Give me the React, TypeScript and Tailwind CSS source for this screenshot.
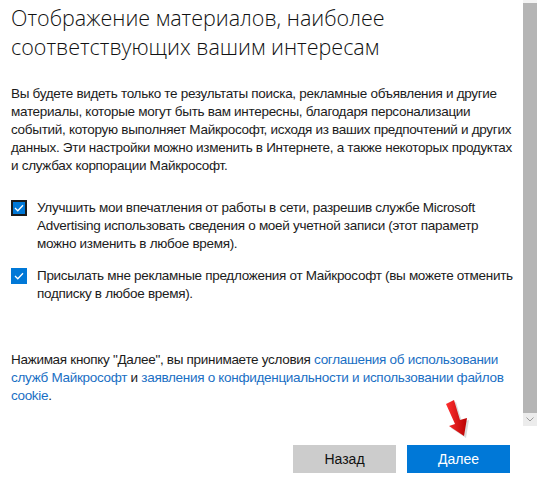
export default function App() {
  return (
    <main className="relative h-[483px] w-[550px] overflow-hidden bg-white [font-family:'Liberation_Sans',Arial,sans-serif] text-[#1b1b1b]">
      <div className="flex h-[426px]">
        <div className="w-[521px] shrink-0 overflow-hidden pl-[11px] whitespace-nowrap">
          <h1 className="pt-[3px] [font-family:'Open_Sans',sans-serif] text-[21.5px] font-light leading-[29px] text-[#111]">
            <div>Отображение материалов, наиболее</div>
            <div>соответствующих вашим интересам</div>
          </h1>

          <div className="mt-[24px] text-[13.5px] leading-[18px] tracking-[-0.3px]">
            <div>Вы будете видеть только те результаты поиска, рекламные объявления и другие</div>
            <div>материалы, которые могут быть вам интересны, благодаря персонализации</div>
            <div>событий, которую выполняет Майкрософт, исходя из ваших предпочтений и других</div>
            <div>данных. Эти настройки можно изменить в Интернете, а также некоторых продуктах</div>
            <div>и службах корпорации Майкрософт.</div>
          </div>

          <div className="mt-[24px] flex gap-[10px] text-[13.5px] leading-[18px] tracking-[-0.3px]">
            <CheckBox focused />
            <div>
              <div>Улучшить мои впечатления от работы в сети, разрешив службе Microsoft</div>
              <div>Advertising использовать сведения о моей учетной записи (этот параметр</div>
              <div>можно изменить в любое время).</div>
            </div>
          </div>

          <div className="mt-[14px] flex gap-[10px] text-[13.5px] leading-[18px] tracking-[-0.3px]">
            <CheckBox />
            <div>
              <div>Присылать мне рекламные предложения от Майкрософт (вы можете отменить</div>
              <div>подписку в любое время).</div>
            </div>
          </div>

          <div className="mt-[48px] text-[13.5px] leading-[18px] tracking-[-0.3px]">
            <div>
              Нажимая кнопку "Далее", вы принимаете условия{" "}
              <a className="text-[#1a6fc4]">соглашения об использовании</a>
            </div>
            <div>
              <a className="text-[#1a6fc4]">служб Майкрософт</a> и{" "}
              <a className="text-[#1a6fc4]">заявления о конфиденциальности и использовании файлов</a>
            </div>
            <div>
              <a className="text-[#1a6fc4]">cookie</a>.
            </div>
          </div>
        </div>

        <div className="ml-[2px] flex w-[14px] flex-col bg-[#f4f4f4]">
          <div className="mt-[3px] flex-1 bg-[#b5b5b5]" />
          <div className="flex h-[13px] items-center justify-center bg-[#ececec]">
            <svg width="8" height="5" viewBox="0 0 8 5" fill="none" stroke="#9a9a9a" strokeWidth="1">
              <path d="M0.5 0.5L4 4L7.5 0.5" />
            </svg>
          </div>
        </div>
      </div>

      <div className="mt-[19px] flex gap-[11px] pl-[293px] text-[14px]">
        <button className="h-[28px] w-[103px] bg-[#cccccc] text-[#111]">Назад</button>
        <button className="h-[28px] w-[103px] bg-[#0078d7] text-white">Далее</button>
      </div>

      <svg
        className="absolute left-[440px] top-[396px]"
        width="36"
        height="44"
        viewBox="0 0 36 44"
      >
        <defs>
          <linearGradient id="arrowRed" x1="0" y1="0" x2="1" y2="0">
            <stop offset="0" stopColor="#ff3030" />
            <stop offset="1" stopColor="#b80000" />
          </linearGradient>
        </defs>
        <path
          d="M6 8 L14 4 L20 24 L27 22 L24 40 L9 30 L15 28 Z"
          fill="#000"
          opacity="0.15"
          transform="translate(2 2)"
        />
        <path d="M6 8 L14 4 L20 24 L27 22 L24 40 L9 30 L15 28 Z" fill="url(#arrowRed)" />
      </svg>
    </main>
  );
}

function CheckBox({ focused = false }: { focused?: boolean }) {
  return (
    <div
      className={
        focused
          ? "mt-[1px] flex h-[16px] w-[16px] shrink-0 items-center justify-center border-2 border-[#1b1b1b] bg-[#0078d7]"
          : "mt-[1px] flex h-[16px] w-[16px] shrink-0 items-center justify-center bg-[#0078d7]"
      }
    >
      <svg width="10" height="8" viewBox="0 0 10 8" fill="none" stroke="white" strokeWidth="1.3">
        <path d="M1 4L3.8 6.8L9 1.2" />
      </svg>
    </div>
  );
}
